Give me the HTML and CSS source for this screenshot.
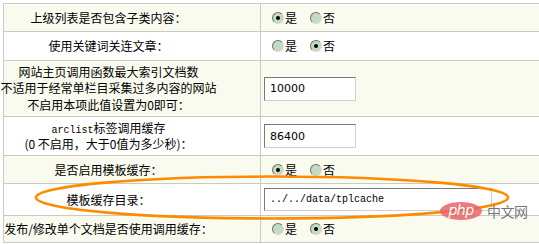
FILE: index.html
```html
<!DOCTYPE html>
<html lang="zh-CN">
<head>
<meta charset="utf-8">
<title>缓存设置</title>
<link rel="stylesheet" href="styles.css">
</head>
<body>
<div class="form">
  <div class="row alt r1">
    <div class="label"><div>上级列表是否包含子类内容：</div></div>
    <div class="field">
      <label class="opt"><input type="radio" name="a" checked><span>是</span></label>
      <label class="opt"><input type="radio" name="a"><span>否</span></label>
    </div>
  </div>
  <div class="row r2">
    <div class="label"><div>使用关键词关连文章：</div></div>
    <div class="field">
      <label class="opt"><input type="radio" name="b"><span>是</span></label>
      <label class="opt"><input type="radio" name="b" checked><span>否</span></label>
    </div>
  </div>
  <div class="row alt r3">
    <div class="label multi"><div>网站主页调用函数最大索引文档数<br>不适用于经常单栏目采集过多内容的网站<br>不启用本项此值设置为0即可：</div></div>
    <div class="field"><input class="text short" type="text" value="10000"></div>
  </div>
  <div class="row r4">
    <div class="label multi"><div><span class="mono">arclist</span>标签调用缓存<br>(0 不启用，大于0值为多少秒)：</div></div>
    <div class="field"><input class="text short" type="text" value="86400"></div>
  </div>
  <div class="row alt r5">
    <div class="label"><div>是否启用模板缓存：</div></div>
    <div class="field">
      <label class="opt"><input type="radio" name="c" checked><span>是</span></label>
      <label class="opt"><input type="radio" name="c"><span>否</span></label>
    </div>
  </div>
  <div class="row r6">
    <div class="label"><div>模板缓存目录：</div></div>
    <div class="field"><input class="text long" type="text" value="../../data/tplcache"></div>
  </div>
  <div class="row alt r7">
    <div class="label"><div>发布/修改单个文档是否使用调用缓存：</div></div>
    <div class="field">
      <label class="opt"><input type="radio" name="d"><span>是</span></label>
      <label class="opt"><input type="radio" name="d" checked><span>否</span></label>
    </div>
  </div>
</div>

<svg class="mark" width="539" height="244" viewBox="0 0 539 244" aria-hidden="true">
  <ellipse cx="272" cy="197.5" rx="236" ry="21" fill="none" stroke="#ff8a00" stroke-width="2.6"/>
</svg>

<div class="watermark">
  <span class="php">php</span><span class="cn">中文网</span>
</div>
</body>
</html>
```

FILE: styles.css
```css
html, body {
  margin: 0;
  padding: 0;
  background: #ffffff;
  overflow: hidden;
}

body {
  font-family: "Noto Sans CJK SC", "Noto Sans", sans-serif;
  font-size: 12px;
  color: #000;
  line-height: 16px;
}

.form {
  margin: 3px 0 0 3px;
  width: 560px;
  border-top: 1px solid #c9c9c9;
  border-left: 1px solid #c9c9c9;
}

.row {
  display: flex;
  border-bottom: 1px solid #c9c9c9;
  background: #ffffff;
}

.row.alt {
  background: #f9fbef;
}

.r1 { height: 27px; }
.r2 { height: 28px; }
.r3 { height: 55px; }
.r4 { height: 38px; }
.r5 { height: 27px; }
.r6 { height: 31px; }
.r7 { height: 26px; }

.label {
  box-sizing: border-box;
  width: 257px;
  flex: none;
  border-right: 1px solid #c9c9c9;
  padding-right: 47px;
  display: flex;
  align-items: center;
  justify-content: center;
  text-align: center;
  white-space: nowrap;
}

.label.multi {
  line-height: 16.5px;
}

.mono {
  font-family: "Liberation Mono", monospace;
  font-size: 10px;
  line-height: 8px;
}

.field {
  flex: 1;
  display: flex;
  align-items: center;
  padding-left: 11px;
}

.opt {
  display: flex;
  align-items: center;
  margin-right: 13px;
}

.opt span {
  margin-left: 1px;
  line-height: 12px;
}

.opt input {
  appearance: none;
  -webkit-appearance: none;
  box-sizing: border-box;
  width: 12px;
  height: 12px;
  margin: 0;
  border-radius: 50%;
  border: 1px solid;
  border-color: #6f6f6f #d8d8d8 #d8d8d8 #6f6f6f;
  background: #c3dac3;
  position: relative;
}

.opt input:checked::after {
  content: "";
  position: absolute;
  left: 3px;
  top: 3px;
  width: 4px;
  height: 4px;
  border-radius: 50%;
  background: #000;
}

.text {
  box-sizing: border-box;
  margin: 0 0 0 -8px;
  padding: 0 0 0 5px;
  border: 1px solid;
  border-color: #7a7a7a #cfcfcf #cfcfcf #7a7a7a;
  background: #fff;
  color: #000;
  outline: none;
}

.text.short {
  width: 92px;
  height: 24px;
  font-family: "DejaVu Sans", "Liberation Sans", sans-serif;
  font-size: 11px;
}

.text.long {
  width: 228px;
  height: 23px;
  font-family: "Liberation Mono", monospace;
  font-size: 10px;
}

.mark {
  position: absolute;
  left: 0;
  top: 0;
  pointer-events: none;
}

.watermark {
  position: absolute;
  left: 440px;
  top: 202px;
  display: flex;
  align-items: center;
  pointer-events: none;
}

.php {
  display: inline-block;
  width: 42px;
  height: 18px;
  border-radius: 50%;
  background: rgba(230, 100, 105, 0.85);
  color: #fff;
  font-family: "DejaVu Sans", sans-serif;
  font-style: italic;
  font-size: 14px;
  line-height: 17px;
  text-align: center;
  letter-spacing: -0.5px;
}

.cn {
  margin-left: 5px;
  font-size: 14px;
  line-height: 16px;
  color: rgba(70, 70, 70, 0.75);
  letter-spacing: -0.5px;
}
```
